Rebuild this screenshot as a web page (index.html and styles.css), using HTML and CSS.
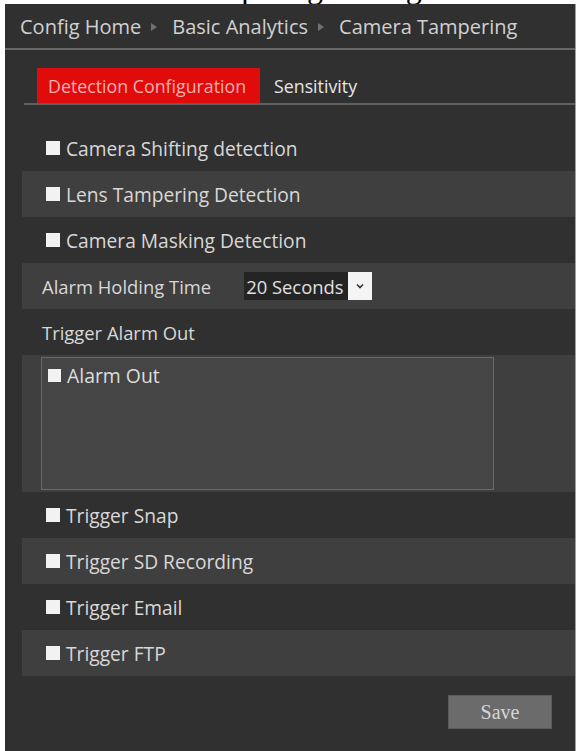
FILE: index.html
```html
<!DOCTYPE html>
<html>
<head>
<meta charset="utf-8">
<link rel="stylesheet" href="styles.css">
</head>
<body>
<div class="caption"><span>Camera Tampering Settings</span></div>
<div class="panel">
  <div class="crumbs">
    <span>Config Home</span><span class="sep"></span><span>Basic Analytics</span><span class="sep"></span><span>Camera Tampering</span>
  </div>
  <div class="tabs">
    <div class="tab active">Detection Configuration</div>
    <div class="tab">Sensitivity</div>
  </div>
  <div class="form">
    <div class="row"><span class="box"></span>Camera Shifting detection</div>
    <div class="row alt"><span class="box"></span>Lens Tampering Detection</div>
    <div class="row"><span class="box"></span>Camera Masking Detection</div>
    <div class="row alt field">
      <span class="label">Alarm Holding Time</span>
      <span class="select"><span class="value">20 Seconds</span><span class="arrow"><svg width="10" height="6" viewBox="0 0 10 6"><path d="M2 1.5 L5 4.5 L8 1.5" fill="none" stroke="#333" stroke-width="1.6"/></svg></span></span>
    </div>
    <div class="row field"><span class="label">Trigger Alarm Out</span></div>
    <div class="outs alt">
      <div class="outbox">
        <div class="outitem"><span class="box"></span>Alarm Out</div>
      </div>
    </div>
    <div class="row"><span class="box"></span>Trigger Snap</div>
    <div class="row alt"><span class="box"></span>Trigger SD Recording</div>
    <div class="row"><span class="box"></span>Trigger Email</div>
    <div class="row alt"><span class="box"></span>Trigger FTP</div>
  </div>
  <div class="actions">
    <button class="save">Save</button>
  </div>
</div>
</body>
</html>
```
FILE: styles.css
```css
html, body {
  margin: 0;
  padding: 0;
  background: #ffffff;
}

body {
  width: 576px;
  height: 751px;
  overflow: hidden;
}

/* document heading, mostly scrolled out of view */
.caption {
  height: 4px;
  overflow: hidden;
}
.caption span {
  display: block;
  margin-top: -29px;
  padding-left: 78px;
  font-family: "Liberation Serif", serif;
  font-size: 32px;
  line-height: 32px;
  color: #000;
  white-space: nowrap;
}

.panel {
  margin-left: 5px;
  height: 747px;
  background: #303030;
  border-right: 1px solid #a0a0a0;
  font-family: "Open Sans", "Noto Sans", sans-serif;
  color: #dcdcdc;
}

/* breadcrumb */
.crumbs {
  height: 44px;
  display: flex;
  align-items: center;
  padding-left: 15px;
  font-size: 20px;
  color: #d0d0d0;
  border-bottom: 2px solid #676767;
  white-space: nowrap;
}
.crumbs .sep {
  width: 0;
  height: 0;
  border-top: 4px solid transparent;
  border-bottom: 4px solid transparent;
  border-left: 6px solid #707070;
  margin: 2px 15px 0 10px;
}

/* tabs */
.tabs {
  margin: 18px 0 0 19px;
  padding-left: 13px;
  display: flex;
  align-items: stretch;
  border-bottom: 2px solid #5e5e5e;
  height: 35px;
}
.tab {
  display: flex;
  align-items: center;
  padding: 0 14px;
  font-size: 17.8px;
  color: #e6e6e6;
  white-space: nowrap;
}
.tab.active {
  background: #e10b0b;
  color: #f4b0b0;
  width: 223px;
  box-sizing: border-box;
  padding: 0 11px;
}

/* form rows */
.form {
  margin: 20px 0 0 17px;
}
.row {
  height: 46px;
  display: flex;
  align-items: center;
  padding-left: 24px;
  font-size: 19.2px;
  color: #d8d8d8;
  white-space: nowrap;
}
.alt {
  background: #3f3f3f;
}
.box {
  width: 14px;
  height: 14px;
  background: #f2f2f2;
  margin-right: 6px;
  flex: none;
}
.field {
  padding-left: 20px;
}
.label {
  font-size: 18.4px;
}

.select {
  display: flex;
  align-items: stretch;
  height: 28px;
  margin-left: 33px;
}
.select .value {
  background: #242424;
  display: flex;
  align-items: center;
  padding: 0 2px;
  width: 104px;
  box-sizing: border-box;
  font-size: 18.4px;
  color: #e0e0e0;
}
.select .arrow {
  width: 24px;
  background: #f4f4f4;
  display: flex;
  align-items: center;
  justify-content: center;
}

/* alarm output list */
.outs {
  height: 137px;
  padding: 2px 0 0 19px;
  box-sizing: border-box;
}
.outbox {
  width: 453px;
  height: 133px;
  box-sizing: border-box;
  border: 1px solid #6a6a6a;
  background: #454545;
  padding: 4px 0 0 6px;
}
.outitem {
  display: flex;
  align-items: center;
  font-size: 19.4px;
  color: #dedede;
}
.outitem .box {
  margin-right: 6px;
  width: 13px;
  height: 13px;
}

/* footer */
.actions {
  display: flex;
  justify-content: flex-end;
  padding: 19px 23px 0 0;
}
.save {
  width: 104px;
  height: 34px;
  background: #6b6b6b;
  border: 1px solid #5a5a5a;
  color: #d6d6d6;
  font-family: "Liberation Serif", serif;
  font-size: 20px;
  padding: 0;
}
```
